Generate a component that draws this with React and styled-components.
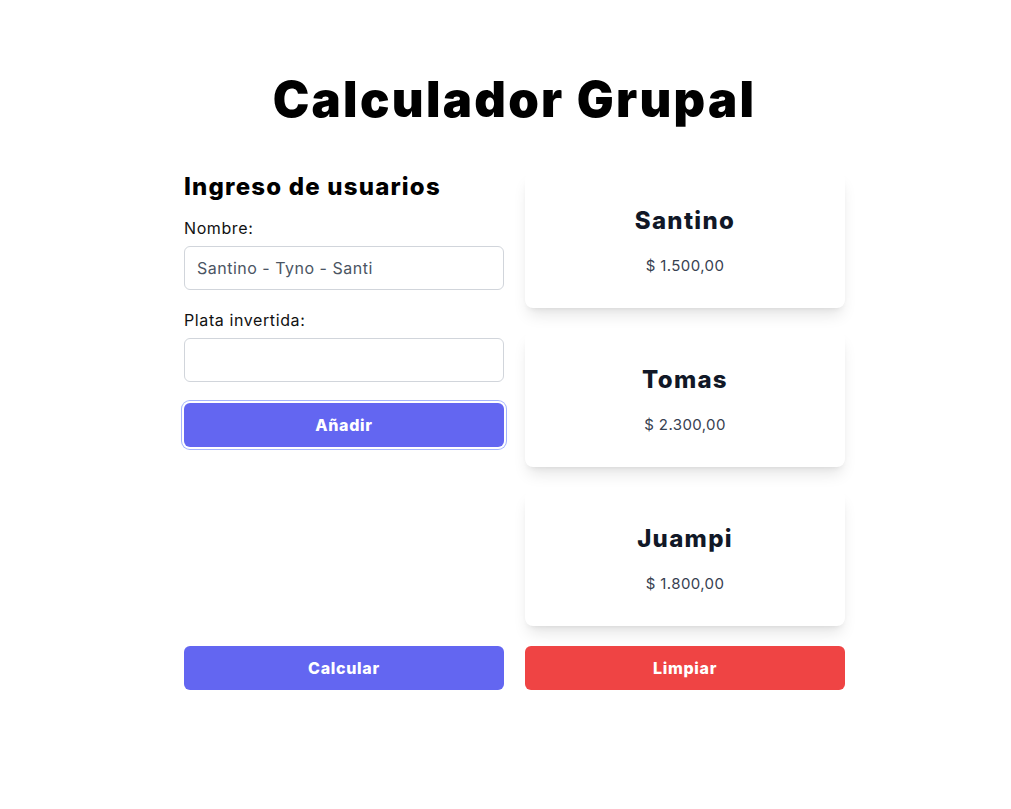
import React from 'react';
import styled, { createGlobalStyle } from 'styled-components';

const GlobalStyle = createGlobalStyle`
    body {
        margin: 0;
        background: #fff;
        font-family: Inter, "Open Sans", sans-serif;
        color: #111;
    }
    * { box-sizing: border-box; }
`;

const Page = styled.main`
    padding: 71px 0 0 18px;
`;
const Content = styled.div`
    width: 661px;
    margin: 0 auto;
`;
const Title = styled.h1`
    margin: 0 0 43px;
    text-align: center;
    font-size: 49px;
    line-height: 58px;
    font-weight: 900;
    letter-spacing: 2.3px;
    color: #000;
`;
const Grid = styled.div`
    display: grid;
    grid-template-columns: 320px 320px;
    column-gap: 21px;
    row-gap: 20px;
    align-items: start;
`;
const Form = styled.form`
    display: flex;
    flex-direction: column;
`;
const Heading = styled.h2`
    margin: 0 0 17px;
    font-size: 24px;
    line-height: 30px;
    font-weight: 800;
    letter-spacing: 1.2px;
    color: #000;
`;
const Label = styled.label`
    font-size: 16px;
    line-height: 18px;
    margin-bottom: 9px;
    letter-spacing: 0.6px;
    color: #111;
`;
const Input = styled.input`
    height: 44px;
    width: 100%;
    border: 1px solid #d1d5db;
    border-radius: 6px;
    padding: 0 12px;
    font-family: inherit;
    font-size: 16px;
    letter-spacing: 0.5px;
    color: #4b5563;
    margin-bottom: 21px;
    outline: none;

    &::placeholder { color: #4b5563; }
`;
const Button = styled.button`
    height: 44px;
    width: 100%;
    border: none;
    border-radius: 6px;
    background: ${p => p.$danger ? '#ef4444' : '#6366f1'};
    color: #fff;
    font-family: inherit;
    font-size: 16px;
    font-weight: 800;
    letter-spacing: 0.7px;
    cursor: pointer;
    box-shadow: ${p => p.$focused ? '0 0 0 2px #fff, 0 0 0 3px #a5b4fc' : 'none'};
`;
const Cards = styled.div`
    display: flex;
    flex-direction: column;
    gap: 23px;
`;
const Card = styled.div`
    height: 136px;
    border-radius: 8px;
    background: #fff;
    box-shadow: 0 10px 15px -3px rgba(0, 0, 0, 0.1), 0 4px 6px -4px rgba(0, 0, 0, 0.1);
    display: flex;
    flex-direction: column;
    align-items: center;
    justify-content: center;
`;
const Name = styled.h3`
    margin: 0 0 21px;
    font-size: 24px;
    line-height: 30px;
    font-weight: 800;
    letter-spacing: 1.3px;
    color: #111827;
`;
const Amount = styled.p`
    margin: 0;
    font-size: 15px;
    line-height: 18px;
    letter-spacing: 0.4px;
    color: #374151;
`;

const users = [
    { name: 'Santino', amount: '$ 1.500,00' },
    { name: 'Tomas', amount: '$ 2.300,00' },
    { name: 'Juampi', amount: '$ 1.800,00' },
];

const App = () => {
    return (
        <>
            <GlobalStyle />
            <Page>
                <Content>
                    <Title>Calculador Grupal</Title>
                    <Grid>
                        <Form onSubmit={e => e.preventDefault()}>
                            <Heading>Ingreso de usuarios</Heading>
                            <Label>Nombre:</Label>
                            <Input placeholder="Santino - Tyno - Santi" />
                            <Label>Plata invertida:</Label>
                            <Input />
                            <Button $focused>Añadir</Button>
                        </Form>
                        <Cards>
                            {users.map(u => (
                                <Card key={u.name}>
                                    <Name>{u.name}</Name>
                                    <Amount>{u.amount}</Amount>
                                </Card>
                            ))}
                        </Cards>
                        <Button>Calcular</Button>
                        <Button $danger>Limpiar</Button>
                    </Grid>
                </Content>
            </Page>
        </>
    );
};

export default App;
